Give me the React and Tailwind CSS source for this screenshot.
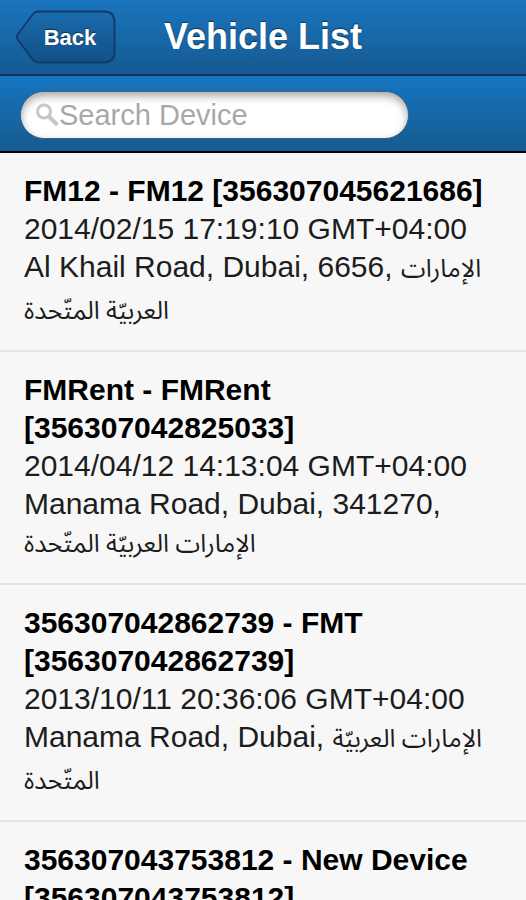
import { useState } from 'react'

const VEHICLES = [
  {
    id: '356307045621686',
    name: 'FM12 - FM12 [356307045621686]',
    date: '2014/02/15 17:19:10 GMT+04:00',
    address: [
      { text: 'Al Khail Road, Dubai, 6656, ', arabic: 'الإمارات' },
      { arabic: 'العربيّة المتّحدة' },
    ],
  },
  {
    id: '356307042825033',
    name: 'FMRent - FMRent [356307042825033]',
    date: '2014/04/12 14:13:04 GMT+04:00',
    address: [
      { text: 'Manama Road, Dubai, 341270,' },
      { arabic: 'الإمارات العربيّة المتّحدة' },
    ],
  },
  {
    id: '356307042862739',
    name: '356307042862739 - FMT [356307042862739]',
    date: '2013/10/11 20:36:06 GMT+04:00',
    address: [
      { text: 'Manama Road, Dubai, ', arabic: 'الإمارات العربيّة' },
      { arabic: 'المتّحدة' },
    ],
  },
  {
    id: '356307043753812',
    name: '356307043753812 - New Device [356307043753812]',
    date: '',
    address: [],
  },
]

function BackButton() {
  return (
    <button type="button" className="relative w-[100px] h-[54px] pl-2 text-[22px] font-bold text-white [text-shadow:0_-1px_1px_rgba(0,0,0,0.5)]">
      <svg viewBox="0 0 100 54" className="absolute inset-0 w-full h-full" aria-hidden="true">
        <defs>
          <linearGradient id="backFill" x1="0" y1="0" x2="0" y2="1">
            <stop offset="0%" stopColor="#1a6cae" />
            <stop offset="100%" stopColor="#134f86" />
          </linearGradient>
        </defs>
        <path
          d="M22 1.5H88Q98.500 1.500 98.500 12V42Q98.500 52.500 88 52.500H22Q19 52.500 17 50L2 30Q0 27 2 24L17 4Q19 1.500 22 1.500Z"
          fill="url(#backFill)" stroke="#12386a" strokeWidth="1.8"
        />
      </svg>
      <span className="relative">Back</span>
    </button>
  )
}

function SearchIcon() {
  return (
    <svg viewBox="0 0 24 24" className="w-6 h-6 shrink-0" fill="none" stroke="#c8c6c6" aria-hidden="true">
      <circle cx="9" cy="8.500" r="6.500" strokeWidth="3" />
      <path d="M14 13.500L22.500 22" strokeWidth="4" />
    </svg>
  )
}

function VehicleRow({ vehicle }) {
  return (
    <li className="border-b-2 border-[#e3e3e3] px-6 pt-[19px] pb-[22px] text-[30px] leading-[38px]">
      <h2 className="font-bold text-black">{vehicle.name}</h2>
      <p>{vehicle.date}</p>
      {vehicle.address.map((line, i) => (
        // a line that mixes both scripts sits a little taller
        <p key={i} className={`whitespace-nowrap ${line.text && line.arabic ? 'pb-1' : ''}`}>
          {line.text}
          {line.arabic && (
            <bdi lang="ar" className="font-['Noto_Sans_Arabic','DejaVu_Sans',sans-serif] text-[25px] leading-none">
              {line.arabic}
            </bdi>
          )}
        </p>
      ))}
    </li>
  )
}

export default function VehicleListPage() {
  const [query, setQuery] = useState('')
  const vehicles = VEHICLES.filter(v => v.name.toLowerCase().includes(query.toLowerCase()))

  return (
    <div className="min-h-screen bg-[#f7f7f7] text-[#1c1c1c] font-['Liberation_Sans',Arial,sans-serif]">
      <header className="grid grid-cols-[1fr_auto_1fr] items-center h-[76px] px-4 border-b-2 border-[#142f5c] bg-linear-to-b from-[#1a75bd] to-[#155a92]">
        <BackButton />
        <h1 className="text-4xl font-bold text-white [text-shadow:0_-1px_1px_rgba(0,0,0,0.5)]">Vehicle List</h1>
      </header>

      {/* Search */}
      <div className="px-5 pt-[15px] pb-3 border-b-2 border-black bg-linear-to-b from-[#1675c0] to-[#165b90]">
        <label className="flex items-center w-4/5 h-12 pl-3.5 pr-5 rounded-full bg-white border border-[#3c5f80] shadow-[inset_0_4px_8px_rgba(0,0,0,0.35)]">
          <SearchIcon />
          <input
            type="search"
            aria-label="Search Device"
            placeholder="Search Device"
            value={query}
            onChange={e => setQuery(e.target.value)}
            className="w-full min-w-0 bg-transparent text-[29px] leading-[38px] text-[#1c1c1c] placeholder:text-[#a9a7a7] outline-none"
          />
        </label>
      </div>

      <ul>
        {vehicles.map(v => (
          <VehicleRow key={v.id} vehicle={v} />
        ))}
      </ul>
    </div>
  )
}
